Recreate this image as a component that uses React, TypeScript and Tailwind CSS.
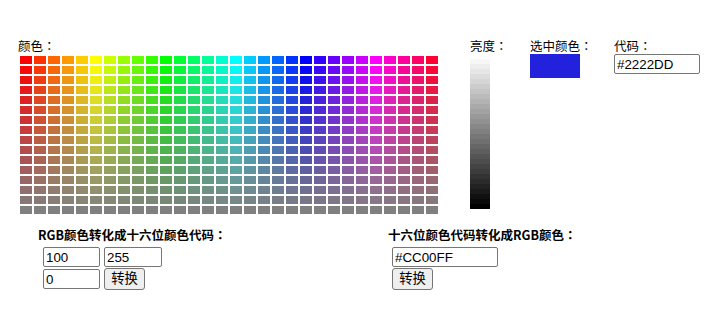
import React from "react";

const hues: [number, number, number][] = (() => {
  const s = [0, 0x33, 0x66, 0x99, 0xcc];
  const out: [number, number, number][] = [];
  s.forEach((v) => out.push([255, v, 0]));
  s.forEach((v) => out.push([255 - v, 255, 0]));
  s.forEach((v) => out.push([0, 255, v]));
  s.forEach((v) => out.push([0, 255 - v, 255]));
  s.forEach((v) => out.push([v, 0, 255]));
  s.forEach((v) => out.push([255, 0, 255 - v]));
  return out;
})();

const rows = Array.from({ length: 16 }, (_, r) => r);

function mix(c: number, r: number) {
  return Math.round(c + ((128 - c) * r) / 15);
}

const cjk = "font-['Microsoft_YaHei','Noto_Sans_CJK_SC',sans-serif]";
const inputCls =
  "h-[20px] border border-[#767676] rounded-[2px] px-[2px] text-[13.33px] leading-[16px] font-['Liberation_Sans',Arial,sans-serif] text-black bg-white outline-none";
const btnCls =
  "h-[22px] w-[41px] border border-[#767676] rounded-[3px] bg-[#efefef] text-[13.33px] leading-[16px] text-black font-['Liberation_Sans','Noto_Sans_CJK_SC',sans-serif] flex items-center justify-center";

function Colon() {
  return <span className="font-['Noto_Sans_CJK_TC',sans-serif]">：</span>;
}

export default function App() {
  return (
    <div className={`w-[716px] h-[310px] bg-white text-black ${cjk} text-[12.5px]`}>
      <div className="flex items-start pt-[38px]">
        <div className="ml-[18px] w-[420px] flex flex-col">
          <div className="h-[16px] leading-[16px]">
            颜色<Colon />
          </div>
          <div className="ml-[2px] mt-[2px] flex flex-col gap-[2px]">
            {rows.map((r) => (
              <div key={r} className="flex gap-[2px]">
                {hues.map((h, i) => (
                  <div
                    key={i}
                    className="w-[12px] h-[8px]"
                    style={{
                      backgroundColor: `rgb(${mix(h[0], r)},${mix(h[1], r)},${mix(h[2], r)})`,
                    }}
                  />
                ))}
              </div>
            ))}
          </div>
        </div>
        <div className="ml-[32px] w-[60px] flex flex-col">
          <div className="h-[16px] leading-[16px]">
            亮度<Colon />
          </div>
          <div className="mt-[5px] w-[20px] flex flex-col">
            {Array.from({ length: 30 }, (_, i) => {
              const v = Math.round(255 - ((i + 1) * 255) / 30);
              return (
                <div
                  key={i}
                  className="h-[5px] w-[20px]"
                  style={{ backgroundColor: `rgb(${v},${v},${v})` }}
                />
              );
            })}
          </div>
        </div>
        <div className="w-[84px] flex flex-col">
          <div className="h-[16px] leading-[16px]">
            选中颜色<Colon />
          </div>
          <div className="w-[50px] h-[24px] bg-[#2222DD]" />
        </div>
        <div className="flex flex-col">
          <div className="h-[16px] leading-[16px]">
            代码<Colon />
          </div>
          <input className={`${inputCls} w-[86px]`} defaultValue="#2222DD" />
        </div>
      </div>

      <div className="flex items-start mt-[13px]">
        <div className="ml-[38px] w-[350px] flex flex-col">
          <div className="h-[16px] leading-[16px] font-bold">
            RGB颜色转化成十六位颜色代码<Colon />
          </div>
          <div className="ml-[5px] mt-[4px] flex gap-[4px]">
            <input className={`${inputCls} w-[57px]`} defaultValue="100" />
            <input className={`${inputCls} w-[58px]`} defaultValue="255" />
          </div>
          <div className="ml-[5px] mt-[1px] flex items-start gap-[4px]">
            <input className={`${inputCls} w-[57px] mt-[1px]`} defaultValue="0" />
            <button className={btnCls}>转换</button>
          </div>
        </div>
        <div className="flex flex-col">
          <div className="h-[16px] leading-[16px] font-bold">
            十六位颜色代码转化成RGB颜色<Colon />
          </div>
          <div className="ml-[4px] mt-[4px] flex flex-col gap-[1px]">
            <input className={`${inputCls} w-[106px]`} defaultValue="#CC00FF" />
            <button className={btnCls}>转换</button>
          </div>
        </div>
      </div>
    </div>
  );
}
